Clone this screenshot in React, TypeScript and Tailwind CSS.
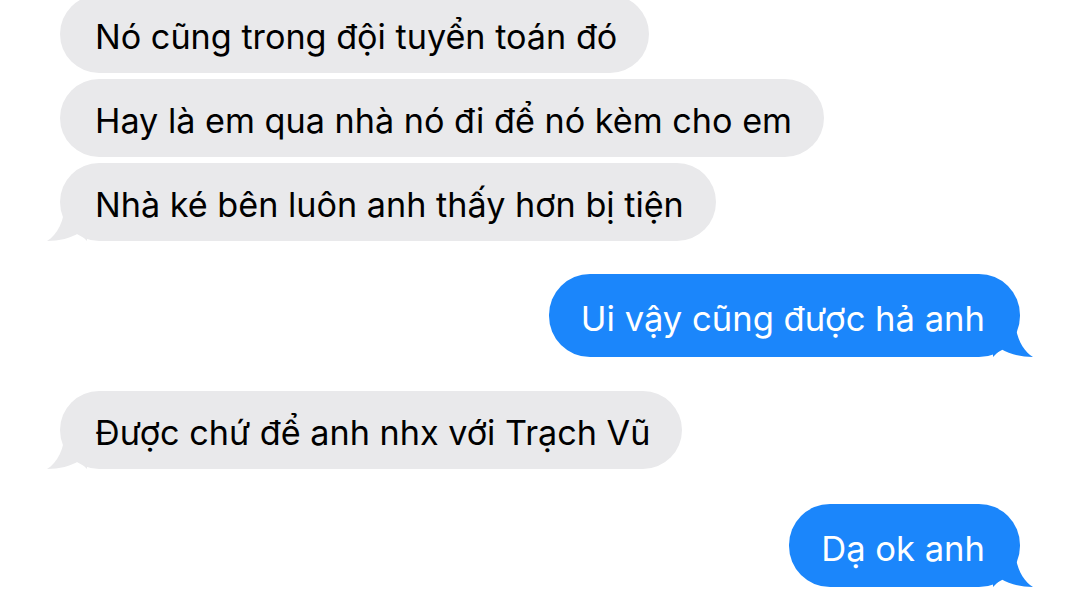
import React from "react";

const GRAY = "#e9e9eb";
const BLUE = "#1b86fb";

function LeftBubble({ text, tail }: { text: string; tail?: boolean }) {
  return (
    <div className="flex justify-start pl-[60px]">
      <div className="relative h-[78px] rounded-[39px] bg-[#e9e9eb] pl-[35px] pr-[32px] flex items-center">
        {tail && (
          <svg className="absolute left-[-13px] bottom-0" width="40" height="40" viewBox="0 0 40 40">
            <path d="M18 0 C18 20 10 34 0 40 C12 40 24 37 32 32 L40 40 L40 0 Z" fill={GRAY} />
          </svg>
        )}
        <span className="relative text-[34.2px] text-black whitespace-nowrap leading-none pt-[7px]">{text}</span>
      </div>
    </div>
  );
}

function RightBubble({ text }: { text: string }) {
  return (
    <div className="flex justify-end pr-[60px]">
      <div className="relative h-[83px] rounded-[41px] bg-[#1b86fb] pl-[32px] pr-[35px] flex items-center">
        <svg className="absolute right-[-13px] bottom-0" width="40" height="40" viewBox="0 0 40 40">
          <path d="M22 0 C22 20 30 34 40 40 C28 40 16 37 8 32 L0 40 L0 0 Z" fill={BLUE} />
        </svg>
        <span className="relative text-[34.6px] text-white whitespace-nowrap leading-none pt-[6px]">{text}</span>
      </div>
    </div>
  );
}

export default function App() {
  return (
    <div
      className="w-[1080px] h-[589px] overflow-hidden bg-white"
      style={{ fontFamily: "Inter, 'Noto Sans', sans-serif" }}
    >
      <div className="flex flex-col -mt-[5px]">
        <div className="flex flex-col gap-[6px]">
          <LeftBubble text="Nó cũng trong đội tuyển toán đó" />
          <LeftBubble text="Hay là em qua nhà nó đi để nó kèm cho em" />
          <LeftBubble text="Nhà ké bên luôn anh thấy hơn bị tiện" tail />
        </div>
        <div className="mt-[33px] flex flex-col">
          <RightBubble text="Ui vậy cũng được hả anh" />
        </div>
        <div className="mt-[34px]">
          <LeftBubble text="Được chứ để anh nhx với Trạch Vũ" tail />
        </div>
        <div className="mt-[35px]">
          <RightBubble text="Dạ ok anh" />
        </div>
      </div>
    </div>
  );
}
